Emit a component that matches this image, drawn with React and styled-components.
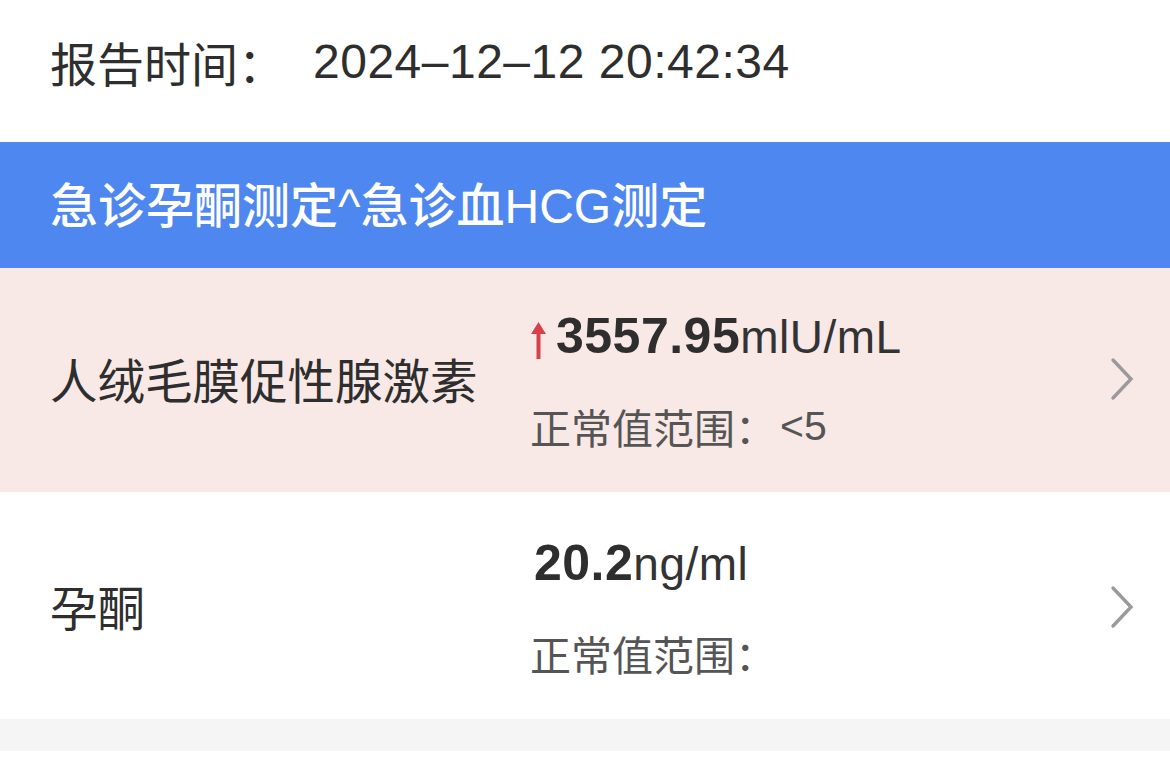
import React from "react";
import styled, { createGlobalStyle } from "styled-components";

const Global = createGlobalStyle`
  html, body { margin: 0; padding: 0; background: #fff; }
  body { font-family: "Liberation Sans", "Noto Sans CJK SC", sans-serif; }
`;

const Page = styled.div`
  width: 1170px;
  height: 767px;
  overflow: hidden;
  display: flex;
  flex-direction: column;
  background: #fff;
`;

const TimeBar = styled.div`
  height: 142px;
  box-sizing: border-box;
  padding: 0 0 20px 50px;
  display: flex;
  align-items: center;
  gap: 28px;
  color: #2e2e2e;
  font-size: 47px;
`;

const TimeLabel = styled.span`
  font-family: "Noto Sans CJK SC", sans-serif;
`;

const TimeValue = styled.span`
  font-family: "Liberation Sans", sans-serif;
  font-size: 48px;
  letter-spacing: 0.5px;
`;

const SectionHeader = styled.div`
  height: 126px;
  box-sizing: border-box;
  padding: 0 0 6px 50px;
  display: flex;
  align-items: center;
  background: #4e87f0;
  color: #fff;
  font-size: 48px;
  font-weight: 500;
  font-family: "Liberation Sans", "Noto Sans CJK SC", sans-serif;
`;

const Row = styled.div`
  height: ${(p) => p.$h}px;
  box-sizing: border-box;
  display: flex;
  align-items: center;
  background: ${(p) => (p.$abnormal ? "#f8e9e7" : "#ffffff")};
  padding: 0 34px 0 50px;
`;

const Name = styled.div`
  width: 480px;
  flex-shrink: 0;
  font-family: "Noto Sans CJK SC", sans-serif;
  font-size: 47.5px;
  color: #2e2e2e;
  margin-top: ${(p) => p.$dy || 0}px;
`;

const Values = styled.div`
  flex: 1;
  display: flex;
  flex-direction: column;
  gap: 28px;
  margin-top: ${(p) => p.$dy || 0}px;
`;

const ValueLine = styled.div`
  display: flex;
  align-items: baseline;
  color: #2e2e2e;
  height: 66px;
`;

const Arrow = styled.svg`
  width: 17px;
  height: 39px;
  margin-right: 9px;
  align-self: center;
`;

const Number = styled.span`
  font-family: "Liberation Sans", sans-serif;
  font-weight: 700;
  font-size: 50px;
  margin-left: ${(p) => p.$ml || 0}px;
  letter-spacing: 0.5px;
`;

const Unit = styled.span`
  font-family: "Liberation Sans", sans-serif;
  font-size: 46px;
  color: #333;
  letter-spacing: 0.5px;
`;

const Range = styled.div`
  font-family: "Noto Sans CJK SC", sans-serif;
  font-size: 41px;
  color: #555;
  height: 50px;
  display: flex;
  align-items: center;
`;

const RangeNum = styled.span`
  font-family: "Liberation Sans", sans-serif;
  font-size: 41px;
  margin-left: 4px;
`;

const Chevron = styled.svg`
  width: 28px;
  height: 44px;
  flex-shrink: 0;
  margin-top: ${(p) => p.$dy || 0}px;
`;

const Divider = styled.div`
  height: 32px;
  background: #f5f5f5;
`;

const ChevronIcon = ({ dy }) => (
  <Chevron $dy={dy} viewBox="0 0 28 44">
    <path d="M5 3 L23 22 L5 41" fill="none" stroke="#9a9a9a" strokeWidth="3.4" strokeLinecap="round" strokeLinejoin="miter" />
  </Chevron>
);

const items = [
  {
    name: "人绒毛膜促性腺激素",
    value: "3557.95",
    unit: "mlU/mL",
    range: "<5",
    up: true,
    h: 224,
  },
  {
    name: "孕酮",
    value: "20.2",
    unit: "ng/ml",
    range: "",
    up: false,
    h: 227,
  },
];

export default function App() {
  return (
    <Page>
      <Global />
      <TimeBar>
        <TimeLabel>报告时间：</TimeLabel>
        <TimeValue>2024–12–12 20:42:34</TimeValue>
      </TimeBar>
      <SectionHeader>急诊孕酮测定^急诊血HCG测定</SectionHeader>
      {items.map((it) => (
        <Row key={it.name} $abnormal={it.up} $h={it.h}>
          <Name $dy={it.up ? -3 : 0}>{it.name}</Name>
          <Values $dy={it.up ? -2 : 0}>
            <ValueLine>
              {it.up && (
                <Arrow viewBox="0 0 17 39">
                  <path d="M8.5 1 L16 13 L10.5 13 L10.5 38 L6.5 38 L6.5 13 L1 13 Z" fill="#d8404c" />
                </Arrow>
              )}
              <Number $ml={it.up ? 0 : 4}>{it.value}</Number>
              <Unit>{it.unit}</Unit>
            </ValueLine>
            <Range>
              正常值范围：{it.range && <RangeNum>{it.range}</RangeNum>}
            </Range>
          </Values>
          <ChevronIcon dy={it.up ? -2 : 2} />
        </Row>
      ))}
      <Divider />
    </Page>
  );
}
